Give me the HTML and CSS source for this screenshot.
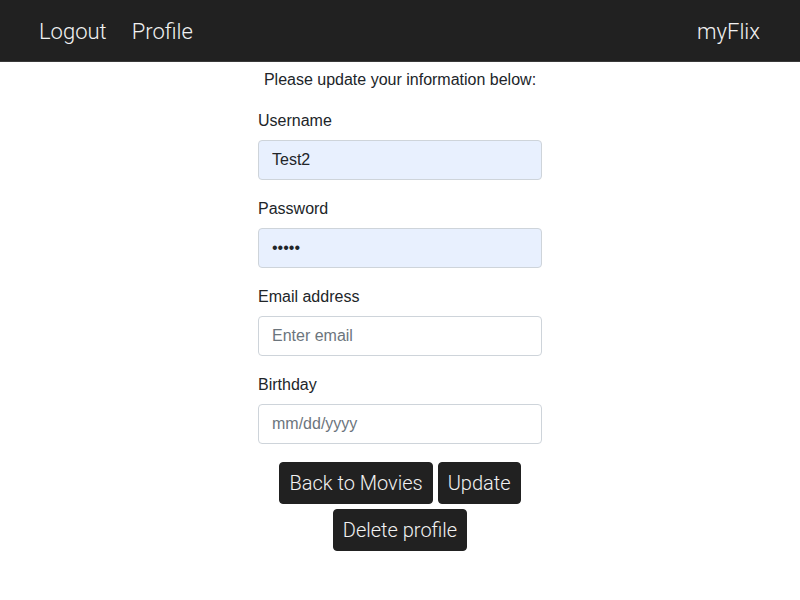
FILE: index.html
```html
<!DOCTYPE html>
<html>
<head>
<meta charset="utf-8">
<link rel="stylesheet" href="styles.css">
</head>
<body>
<nav class="navbar">
  <div class="nav-links">
    <a class="nav-link" href="#">Logout</a>
    <a class="nav-link" href="#">Profile</a>
  </div>
  <a class="brand" href="#">myFlix</a>
</nav>
<main class="content">
  <form class="profile-form">
    <p class="intro">Please update your information below:</p>
    <div class="form-group">
      <label class="form-label">Username</label>
      <input class="form-control autofill" type="text" value="Test2">
    </div>
    <div class="form-group">
      <label class="form-label">Password</label>
      <input class="form-control autofill" type="password" value="12345">
    </div>
    <div class="form-group">
      <label class="form-label">Email address</label>
      <input class="form-control" type="text" placeholder="Enter email">
    </div>
    <div class="form-group">
      <label class="form-label">Birthday</label>
      <input class="form-control" type="text" placeholder="mm/dd/yyyy">
    </div>
    <div class="buttons">
      <button class="btn" type="button">Back to Movies</button>
      <button class="btn" type="button">Update</button>
      <button class="btn" type="button">Delete profile</button>
    </div>
  </form>
</main>
</body>
</html>
```
FILE: styles.css
```css
* { box-sizing: border-box; }
body {
  margin: 0;
  background: #fff;
  font-family: "Liberation Sans", Arial, sans-serif;
  color: #212529;
}
.navbar {
  height: 62px;
  background: #212121;
  border-bottom: 1px solid #3a3a3a;
  display: flex;
  align-items: center;
  justify-content: space-between;
  padding: 2px 40px 0 39px;
}
.nav-links {
  display: flex;
  gap: 25px;
}
.nav-link, .brand {
  font-family: Roboto, "Open Sans", sans-serif;
  font-weight: 300;
  font-size: 22px;
  color: #f2f2f2;
  text-decoration: none;
}
.content {
  display: flex;
  justify-content: center;
}
.profile-form {
  width: 284px;
  margin-top: 6px;
}
.intro {
  margin: 0 -20px 17px;
  text-align: center;
  font-size: 16px;
  line-height: 24px;
}
.form-group {
  margin-bottom: 17px;
}
.form-label {
  display: block;
  font-size: 16px;
  line-height: 24px;
  margin-bottom: 7px;
}
.form-control {
  display: block;
  width: 100%;
  height: 40px;
  padding: 6px 13px;
  font-family: "Liberation Sans", Arial, sans-serif;
  font-size: 16px;
  color: #212529;
  background: #fff;
  border: 1px solid #ced4da;
  border-radius: 4px;
  outline: none;
}
.form-control::placeholder { color: #6c757d; }
.autofill {
  background: #e8f0fe;
}
.buttons {
  display: flex;
  flex-wrap: wrap;
  justify-content: center;
  gap: 5px 5px;
  padding-top: 1px;
}
.btn {
  height: 42px;
  padding: 0 9px;
  background: #212121;
  color: #f2f2f2;
  border: 1px solid #212121;
  border-radius: 4px;
  font-family: Roboto, "Open Sans", sans-serif;
  font-weight: 300;
  font-size: 20px;
}
```
